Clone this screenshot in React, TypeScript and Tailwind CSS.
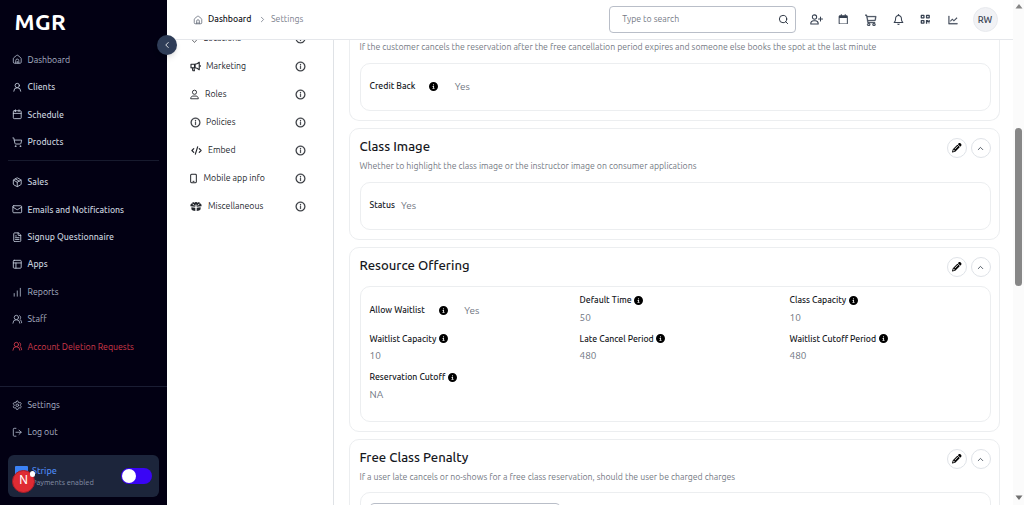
import React from "react";
import {
  UserRound, Calendar, ShoppingCart, Package, Mail, FileText, PanelsTopLeft,
  ChartNoAxesColumnIncreasing, UsersRound, Settings, LogOut, ChevronLeft,
  ChevronRight, ChevronUp, Search, MapPin, CodeXml,
} from "lucide-react";
import { FaCircleInfo, FaRegCalendar, FaRegBell, FaPencil, FaQrcode } from "react-icons/fa6";
import { AiOutlineInfoCircle, AiOutlineLineChart } from "react-icons/ai";
import { BsCart3 } from "react-icons/bs";

type IconProps = { className?: string };

function HomeIcon({ className }: IconProps) {
  return (
    <svg viewBox="0 0 24 24" fill="none" stroke="currentColor" strokeWidth="2" strokeLinecap="round" strokeLinejoin="round" className={className}>
      <path d="M3 10.500a2.500 2.500 0 0 1 1-2l6.400-5.200a2.500 2.500 0 0 1 3.200 0L20 8.500a2.500 2.500 0 0 1 1 2V19a2 2 0 0 1-2 2H5a2 2 0 0 1-2-2z" />
      <path d="M8.500 21v-6a3.500 3.500 0 0 1 7 0v6M12 17v4" />
    </svg>
  );
}

function UserAddIcon({ className }: IconProps) {
  return (
    <svg viewBox="0 0 26 22" fill="none" stroke="currentColor" strokeWidth="2.100" strokeLinecap="round" strokeLinejoin="round" className={className}>
      <circle cx="9" cy="6" r="4.300" />
      <path d="M1.500 20c0-4 2.500-6.500 6-6.500h3c3.500 0 6 2.500 6 6.500zM21 6v8M17 10h8" />
    </svg>
  );
}

function UserIcon({ className }: IconProps) {
  return (
    <svg viewBox="0 0 20 22" fill="none" stroke="currentColor" strokeWidth="2" strokeLinejoin="round" className={className}>
      <circle cx="10" cy="6" r="4.600" />
      <path d="M1.500 20.500c0-4 2.500-6 5-6h7c2.500 0 5 2 5 6z" />
    </svg>
  );
}

function HornIcon({ className }: IconProps) {
  return (
    <svg viewBox="0 0 22 20" fill="none" stroke="currentColor" strokeWidth="2.200" strokeLinejoin="round" className={className}>
      <path d="M9 5.500H2v7h7M9 5.500c4 0 7-1.500 9.500-4v15c-2.500-2.500-5.500-4-9.500-4z" />
      <path d="M4.500 12.500l1.200 6h3.200l-1-6" />
      <path d="M20.500 7.500v3M10 5v8" strokeWidth="2.600" />
    </svg>
  );
}

function PhoneIcon({ className }: IconProps) {
  return (
    <svg viewBox="0 0 16 22" fill="none" stroke="currentColor" strokeWidth="2.300" className={className}>
      <rect x="1.500" y="1.500" width="13" height="19" rx="2" />
      <path d="M6 17.500h4" />
    </svg>
  );
}

function GiftIcon({ className }: IconProps) {
  return (
    <svg viewBox="0 0 26 22" fill="currentColor" className={className}>
      <path d="M12 6C10 1 5 1 4 4.500 1.500 5 .500 7.500 1 10.500l10.500 1zM14 6c2-5 7-5 8 -1.500 2.500.5 3.500 3 3 6l-10.500 1z" />
      <path d="M3 12.500l8.500 1V21L6 19.500c-2-.7-3-2-3-4zM23 12.500l-8.500 1V21l5.500-1.500c2-.7 3-2 3-4z" />
      <circle cx="13" cy="4" r="3" />
      <path d="M5.500 5.500l4 3M20.500 5.500l-4 3" stroke="white" strokeWidth="2" />
    </svg>
  );
}

type Icon = React.ComponentType<IconProps>;
type NavItem = { icon: Icon; label: string; tone: string };

const dim = "text-[#a9b1c3]";
const bright = "text-[#c5cddb] font-medium";

const primary: NavItem[] = [
  { icon: HomeIcon, label: "Dashboard", tone: dim },
  { icon: UserRound, label: "Clients", tone: bright },
  { icon: Calendar, label: "Schedule", tone: bright },
  { icon: ShoppingCart, label: "Products", tone: bright },
];
const secondary: NavItem[] = [
  { icon: Package, label: "Sales", tone: bright },
  { icon: Mail, label: "Emails and Notifications", tone: bright },
  { icon: FileText, label: "Signup Questionnaire", tone: bright },
  { icon: PanelsTopLeft, label: "Apps", tone: bright },
  { icon: ChartNoAxesColumnIncreasing, label: "Reports", tone: dim },
  { icon: UsersRound, label: "Staff", tone: dim },
  { icon: UsersRound, label: "Account Deletion Requests", tone: "text-[#d03a4a]" },
];
const footer: NavItem[] = [
  { icon: Settings, label: "Settings", tone: dim },
  { icon: LogOut, label: "Log out", tone: dim },
];

function SideList({ items }: { items: NavItem[] }) {
  return (
    <ul className="px-3">
      {items.map(({ icon: I, label, tone }) => (
        <li key={label} className={`flex h-[27.4px] items-center gap-[5px] whitespace-nowrap ${tone}`}>
          <I className="size-[10.500px] shrink-0" />
          <span className="pt-[1.200px]">{label}</span>
        </li>
      ))}
    </ul>
  );
}

function Sidebar() {
  return (
    <aside className="relative flex h-full w-[167px] shrink-0 flex-col bg-[#020013] text-[8.750px]">
      <div className="h-[46px] pl-[14.500px] pt-[7px] text-[22.500px] font-bold leading-[30px] tracking-[0.5px] text-white">MGR</div>
      <SideList items={primary} />
      <div className="mx-2 mt-[4px] h-px shrink-0 bg-[#171a2e]" />
      <div className="pt-[8px]"><SideList items={secondary} /></div>
      <div className="mt-auto border-t border-[#1a1d33] pt-[4px]"><SideList items={footer} /></div>
      <div className="relative mx-2 mb-2 mt-[9px] flex h-[42px] shrink-0 items-center justify-between rounded-[6px] bg-[#1c253b] pl-[7px] pr-[7px]">
        <div className="flex">
          <span className="mt-[1px] h-[9px] w-[13px] rounded-[1px] bg-[#3b82f6]" />
          <div className="pl-[4px] pt-[1px]">
            <p className="text-[9px] font-medium leading-[11px] text-[#4b86f0]">Stripe</p>
            <p className="text-[7.500px] leading-[11px] text-[#8590a6]">Payments enabled</p>
          </div>
        </div>
        <span className="flex h-[16px] w-[31px] items-center rounded-full bg-[#3a05f5] px-px">
          <span className="size-[14px] rounded-full bg-white" />
        </span>
        <span className="absolute left-[4px] top-[14.500px] flex size-[23px] items-center justify-center rounded-full border border-[#a51d28] bg-[#df2b33] text-white">
          <span className="font-['Inter','Liberation_Sans',sans-serif] text-[11.500px]">N</span>
        </span>
        <span className="absolute left-[21.500px] top-[16px] size-[5.500px] rounded-full bg-white" />
      </div>
      <span className="absolute left-[157px] top-[34.500px] z-20 flex size-5 items-center justify-center rounded-full bg-[#2f3d58] text-white shadow-md">
        <ChevronLeft className="size-[10px]" />
      </span>
    </aside>
  );
}

function Header() {
  const icons: [Icon, string][] = [
    [UserAddIcon, "h-[11px] w-[13px]"],
    [FaRegCalendar, "size-[10.500px]"],
    [BsCart3, "size-[12px] [stroke-width:0.5px]"],
    [FaRegBell, "size-[11px]"],
    [FaQrcode, "size-[10.500px]"],
    [AiOutlineLineChart, "size-[12px] [stroke-width:20px]"],
  ];
  return (
    <header className="flex h-10 shrink-0 items-center border-b border-[#e5e7eb] pl-[26px] pr-[15px]">
      <HomeIcon className="size-[10px] text-[#6b7280]" />
      <span className="ml-[5px] w-[44px] pt-px text-[8.750px] font-medium text-[#15171c]">Dashboard</span>
      <ChevronRight className="ml-[6px] size-[9px] text-[#6b7280]" />
      <span className="ml-[4px] pt-px text-[8.750px] text-[#7c828e]">Settings</span>
      <div className="ml-auto flex h-[27px] w-[187px] items-center justify-between rounded-[4px] border border-[#b9bec8] pl-[12px] pr-[6px] text-[8.750px] text-[#757b87]">
        <span className="pt-px">Type to search</span>
        <Search className="size-[11px] text-[#1f2937]" />
      </div>
      <div className="ml-[6.500px] flex">
        {icons.map(([I, size], i) => (
          <span key={i} className="flex w-[27.300px] justify-center text-[#374151]"><I className={size} /></span>
        ))}
      </div>
      <span className="ml-[6px] mr-[0.500px] flex size-[25px] items-center justify-center rounded-full border border-[#e8eaee] bg-[#f1f2f5] text-[9.300px] font-medium text-[#374151]">RW</span>
    </header>
  );
}

const sections: [Icon, string, string, string][] = [
  [MapPin, "Locations", "w-[9px]", "ml-[5px]"],
  [HornIcon, "Marketing", "w-[11px]", "ml-[5.500px]"],
  [UserIcon, "Roles", "w-[9px]", "ml-[6.500px]"],
  [AiOutlineInfoCircle, "Policies", "w-[11px] [stroke-width:25px]", "ml-[5.500px]"],
  [CodeXml, "Embed", "w-[13px] [stroke-width:2.6px]", "ml-[5.500px]"],
  [PhoneIcon, "Mobile app info", "w-[7px]", "ml-[7px]"],
  [GiftIcon, "Miscellaneous", "w-[12px]", "ml-[6.500px]"],
];

function SettingsNav() {
  return (
    <nav className="w-[167px] shrink-0 border-r border-[#dfe2e6]">
      <ul className="-mt-4">
        {sections.map(([I, label, w, gap]) => (
          <li key={label} className="flex h-7 items-center pl-[22.500px] pr-[27px] text-[8.750px] text-[#24272d]">
            <I className={`h-[11px] shrink-0 ${w}`} />
            <span className={`pt-[1.500px] ${gap}`}>{label}</span>
            <AiOutlineInfoCircle className="ml-auto size-[11px] [stroke-width:25px]" />
          </li>
        ))}
      </ul>
    </nav>
  );
}

function CardHead({ title, text }: { title: string; text?: string }) {
  return (
    <>
      <div className="flex h-5 items-center gap-[3.500px]">
        <h2 className="-mt-[5px] mr-auto text-[13.125px] font-medium leading-5 text-[#16181d]">{title}</h2>
        <span className="flex size-5 items-center justify-center rounded-full border border-[#dfe3e8]"><FaPencil className="size-[9.500px] text-black" /></span>
        <span className="flex size-5 items-center justify-center rounded-full border border-[#dfe3e8]"><ChevronUp className="size-[9px] text-[#1f2937]" /></span>
      </div>
      {text && <p className="mt-[1px] text-[8.720px] leading-[14px] text-[#767b85]">{text}</p>}
    </>
  );
}

const card = "rounded-[10px] border border-[#eceef0] pl-[9.500px] pr-[8.500px]";
const inner = "rounded-[10px] border border-[#eceef0] px-[9px]";
const label = "text-[8.720px] font-medium text-[#16181d]";
const value = "text-[10px] text-[#6f7581]";

function Field({ name, val }: { name: string; val: string }) {
  return (
    <div className="h-[38.500px]">
      <div className="flex h-[17px] items-center gap-[2.500px]">
        <span className={`pt-[1.500px] ${label}`}>{name}</span>
        <FaCircleInfo className="size-[9px] text-black" />
      </div>
      <div className={`h-[18px] leading-[18px] ${value}`}>{val}</div>
    </div>
  );
}

function Content() {
  return (
    <main className="flex-1 overflow-hidden pl-[15px] pr-[13px]">
      <section className="h-[81px] rounded-b-[10px] border-x border-b border-[#eceef0] pl-[9.500px] pr-[8.500px]">
        <p className="text-[8.720px] leading-[14px] text-[#767b85]">If the customer cancels the reservation after the free cancellation period expires and someone else books the spot at the last minute</p>
        <div className={`mt-[9px] flex h-12 items-center pb-[1px] ${inner}`}>
          <span className={label}>Credit Back</span>
          <FaCircleInfo className="ml-[13.500px] mr-[17px] size-[9px] text-black" />
          <span className={value}>Yes</span>
        </div>
      </section>
      <section className={`mt-[7px] h-[112px] pt-[9px] ${card}`}>
        <CardHead title="Class Image" text="Whether to highlight the class image or the instructor image on consumer applications" />
        <div className={`mt-[9px] flex h-12 items-center gap-[6px] pb-[1px] ${inner}`}>
          <span className={label}>Status</span>
          <span className={value}>Yes</span>
        </div>
      </section>
      <section className={`mt-[7px] h-[185px] pt-[9px] ${card}`}>
        <CardHead title="Resource Offering" />
        <div className={`mt-[9px] grid h-[136px] grid-cols-3 content-start gap-x-[19px] pt-[4.500px] ${inner}`}>
          <div className="flex h-[38.500px] items-center pb-[1px]">
            <span className={label}>Allow Waitlist</span>
            <FaCircleInfo className="ml-[14px] mr-[16.500px] size-[9px] text-black" />
            <span className={value}>Yes</span>
          </div>
          <Field name="Default Time" val="50" />
          <Field name="Class Capacity" val="10" />
          <Field name="Waitlist Capacity" val="10" />
          <Field name="Late Cancel Period" val="480" />
          <Field name="Waitlist Cutoff Period" val="480" />
          <Field name="Reservation Cutoff" val="NA" />
        </div>
      </section>
      <section className={`mt-[7px] h-[150px] pt-[9px] ${card}`}>
        <CardHead title="Free Class Penalty" text="If a user late cancels or no-shows for a free class reservation, should the user be charged charges" />
        <div className={`mt-[8px] h-[100px] pt-[9.500px] ${inner}`}>
          <div className="h-7 w-[190px] rounded-[4px] border border-[#b9bec8]" />
        </div>
      </section>
    </main>
  );
}

function Scrollbar() {
  return (
    <div className="flex w-[11px] shrink-0 flex-col items-center bg-[#fbfbfb]">
      <svg viewBox="0 0 8 5" className="mt-[4px] h-[5px] w-[8px]"><path d="M4 0l3.500 4.500h-7z" fill="#858585" /></svg>
      <div className="mt-[119px] h-[158px] w-[7px] rounded-full bg-[#878787]" />
      <svg viewBox="0 0 8 5" className="mb-[5px] mt-auto h-[5px] w-[8px]"><path d="M4 5L.500.500h7z" fill="#707070" /></svg>
    </div>
  );
}

export default function App() {
  return (
    <div className="flex h-[505px] w-[1024px] overflow-hidden bg-white font-['Ubuntu','Open_Sans','Noto_Sans',sans-serif]">
      <Sidebar />
      <div className="flex min-w-0 flex-1 flex-col">
        <Header />
        <div className="flex min-h-0 flex-1 overflow-hidden">
          <SettingsNav />
          <Content />
        </div>
      </div>
      <Scrollbar />
    </div>
  );
}
